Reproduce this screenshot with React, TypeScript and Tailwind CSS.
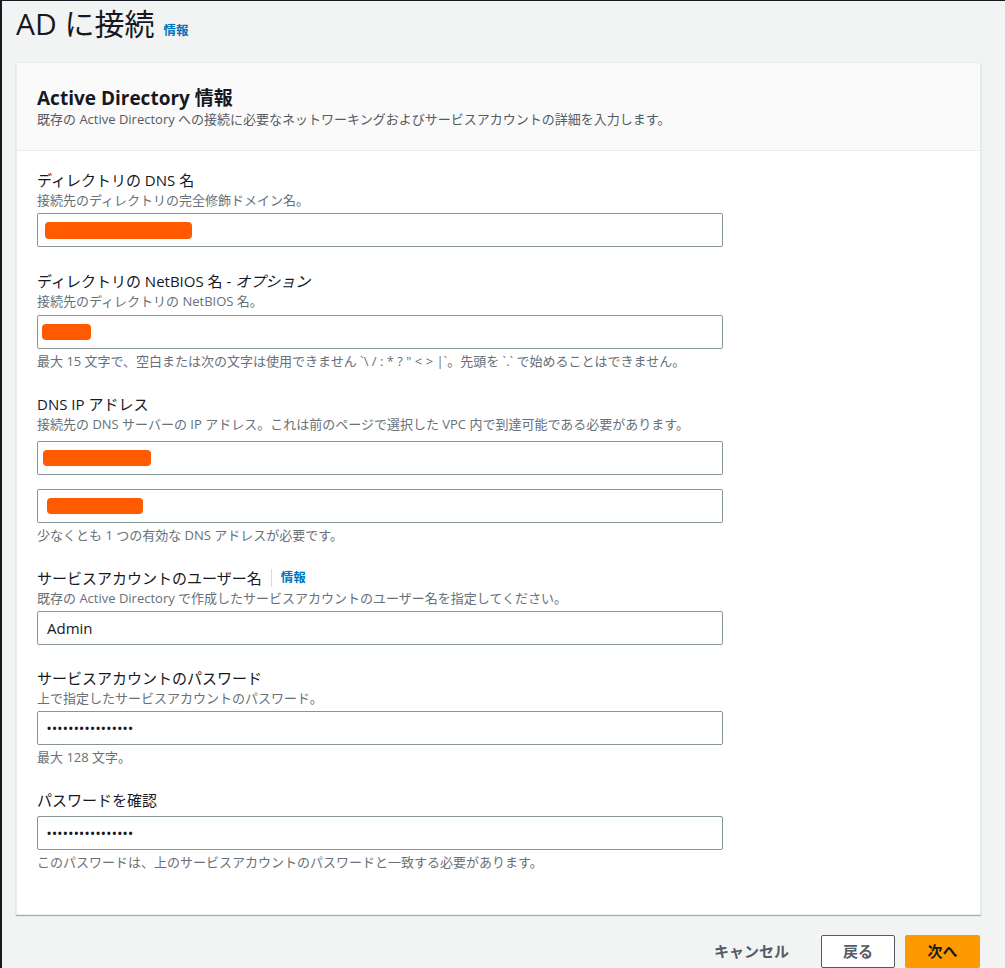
export default function App() {
  const font = { fontFamily: '"Open Sans", "Noto Sans CJK JP", sans-serif' }

  return (
    <div className="h-[968px] overflow-hidden bg-[#f2f3f3] border-l-[2px] border-t border-[#16191f] text-[#16191f]" style={font}>
      <div className="pl-[14px] pr-[24px]">
        {/* page title */}
        <div className="flex items-baseline gap-[9px] h-[56px] pt-[3px]">
          <h1 className="text-[30px] leading-[40px] font-normal">AD に接続</h1>
          <a className="text-[12.5px] font-bold text-[#0073bb]">情報</a>
        </div>

        {/* card */}
        <div className="mt-[5px] bg-white border border-[#eaeded] shadow-[0_1px_1px_0_rgba(0,28,36,0.3)]">
          <div className="bg-[#fafafa] border-b border-[#eaeded] px-[20px] pt-[23px] pb-[23px]">
            <h2 className="text-[19px] leading-[24px] font-bold">Active Directory 情報</h2>
            <p className="text-[13px] leading-[16px] text-[#545b64] mt-[1px]">既存の Active Directory への接続に必要なネットワーキングおよびサービスアカウントの詳細を入力します。</p>
          </div>

          <div className="px-[20px] pt-[19px] pb-[44px]">
            {/* DNS name */}
            <Label text="ディレクトリの DNS 名" />
            <Desc text="接続先のディレクトリの完全修飾ドメイン名。" />
            <Box className="mt-[5px]">
              <span className="ml-[7px] block w-[147px] h-[17px] rounded-[4px] bg-[#ff5a00]" />
            </Box>

            {/* NetBIOS */}
            <div className="mt-[24px]">
              <Label text="ディレクトリの NetBIOS 名 - オプション" italicSuffix />
              <Desc text="接続先のディレクトリの NetBIOS 名。" />
              <Box className="mt-[6px]">
                <span className="ml-[4px] block w-[49px] h-[16px] rounded-[4px] bg-[#ff5a00]" />
              </Box>
              <Note text={'最大 15 文字で、空白または次の文字は使用できません `\\ / : * ? " < > |`。先頭を `.` で始めることはできません。'} />
            </div>

            {/* DNS IP */}
            <div className="mt-[25px]">
              <Label text="DNS IP アドレス" />
              <Desc text="接続先の DNS サーバーの IP アドレス。これは前のページで選択した VPC 内で到達可能である必要があります。" />
              <Box className="mt-[9px]">
                <span className="ml-[5px] block w-[108px] h-[16px] rounded-[4px] bg-[#ff5a00]" />
              </Box>
              <Box className="mt-[14px]">
                <span className="ml-[9px] block w-[96px] h-[16px] rounded-[4px] bg-[#ff5a00]" />
              </Box>
              <Note text="少なくとも 1 つの有効な DNS アドレスが必要です。" />
            </div>

            {/* service account user */}
            <div className="mt-[25px]">
              <div className="flex items-center text-[15px] leading-[20px]">
                <span>サービスアカウントのユーザー名</span>
                <span className="mx-[9px] h-[18px] border-l border-[#d5dbdb]" />
                <a className="text-[12.5px] font-bold text-[#0073bb]">情報</a>
              </div>
              <Desc text="既存の Active Directory で作成したサービスアカウントのユーザー名を指定してください。" />
              <Box className="mt-[5px]">
                <span className="ml-[9px] text-[15px]">Admin</span>
              </Box>
            </div>

            {/* service account password */}
            <div className="mt-[23px]">
              <Label text="サービスアカウントのパスワード" />
              <Desc text="上で指定したサービスアカウントのパスワード。" />
              <Box className="mt-[5px]">
                <Dots />
              </Box>
              <Note text="最大 128 文字。" />
            </div>

            {/* confirm */}
            <div className="mt-[25px]">
              <Label text="パスワードを確認" />
              <Box className="mt-[6px]">
                <Dots />
              </Box>
              <Note text="このパスワードは、上のサービスアカウントのパスワードと一致する必要があります。" />
            </div>
          </div>
        </div>

        {/* actions */}
        <div className="flex justify-end items-center mt-[20px] gap-[10px]">
          <button className="px-[20px] h-[33px] text-[15px] font-bold text-[#545b64] mr-[2px]">キャンセル</button>
          <button className="w-[74px] h-[33px] border border-[#545b64] rounded-[2px] bg-white text-[15px] font-bold text-[#545b64]">戻る</button>
          <button className="w-[75px] h-[33px] rounded-[2px] bg-[#ff9900] text-[15px] font-bold text-[#16191f] mr-[1px]">次へ</button>
        </div>
      </div>
    </div>
  )
}

function Label({ text, italicSuffix }: { text: string; italicSuffix?: boolean }) {
  if (italicSuffix) {
    const [main, opt] = text.split(" - ")
    return (
      <div className="text-[15px] leading-[20px]">
        {main} - <i>{opt}</i>
      </div>
    )
  }
  return <div className="text-[15px] leading-[20px]">{text}</div>
}

function Desc({ text }: { text: string }) {
  return <div className="text-[13px] leading-[16px] text-[#687078] mt-[2px]">{text}</div>
}

function Note({ text }: { text: string }) {
  return <div className="text-[13px] leading-[16px] text-[#687078] mt-[4px]">{text}</div>
}

function Box({ children, className }: { children?: React.ReactNode; className?: string }) {
  return (
    <div className={`w-[686px] h-[34px] flex items-center bg-white border border-[#879596] rounded-[2px] ${className ?? ""}`}>
      {children}
    </div>
  )
}

function Dots() {
  return <span className="ml-[9px] text-[11px] tracking-[1.3px] font-bold">••••••••••••••••</span>
}
